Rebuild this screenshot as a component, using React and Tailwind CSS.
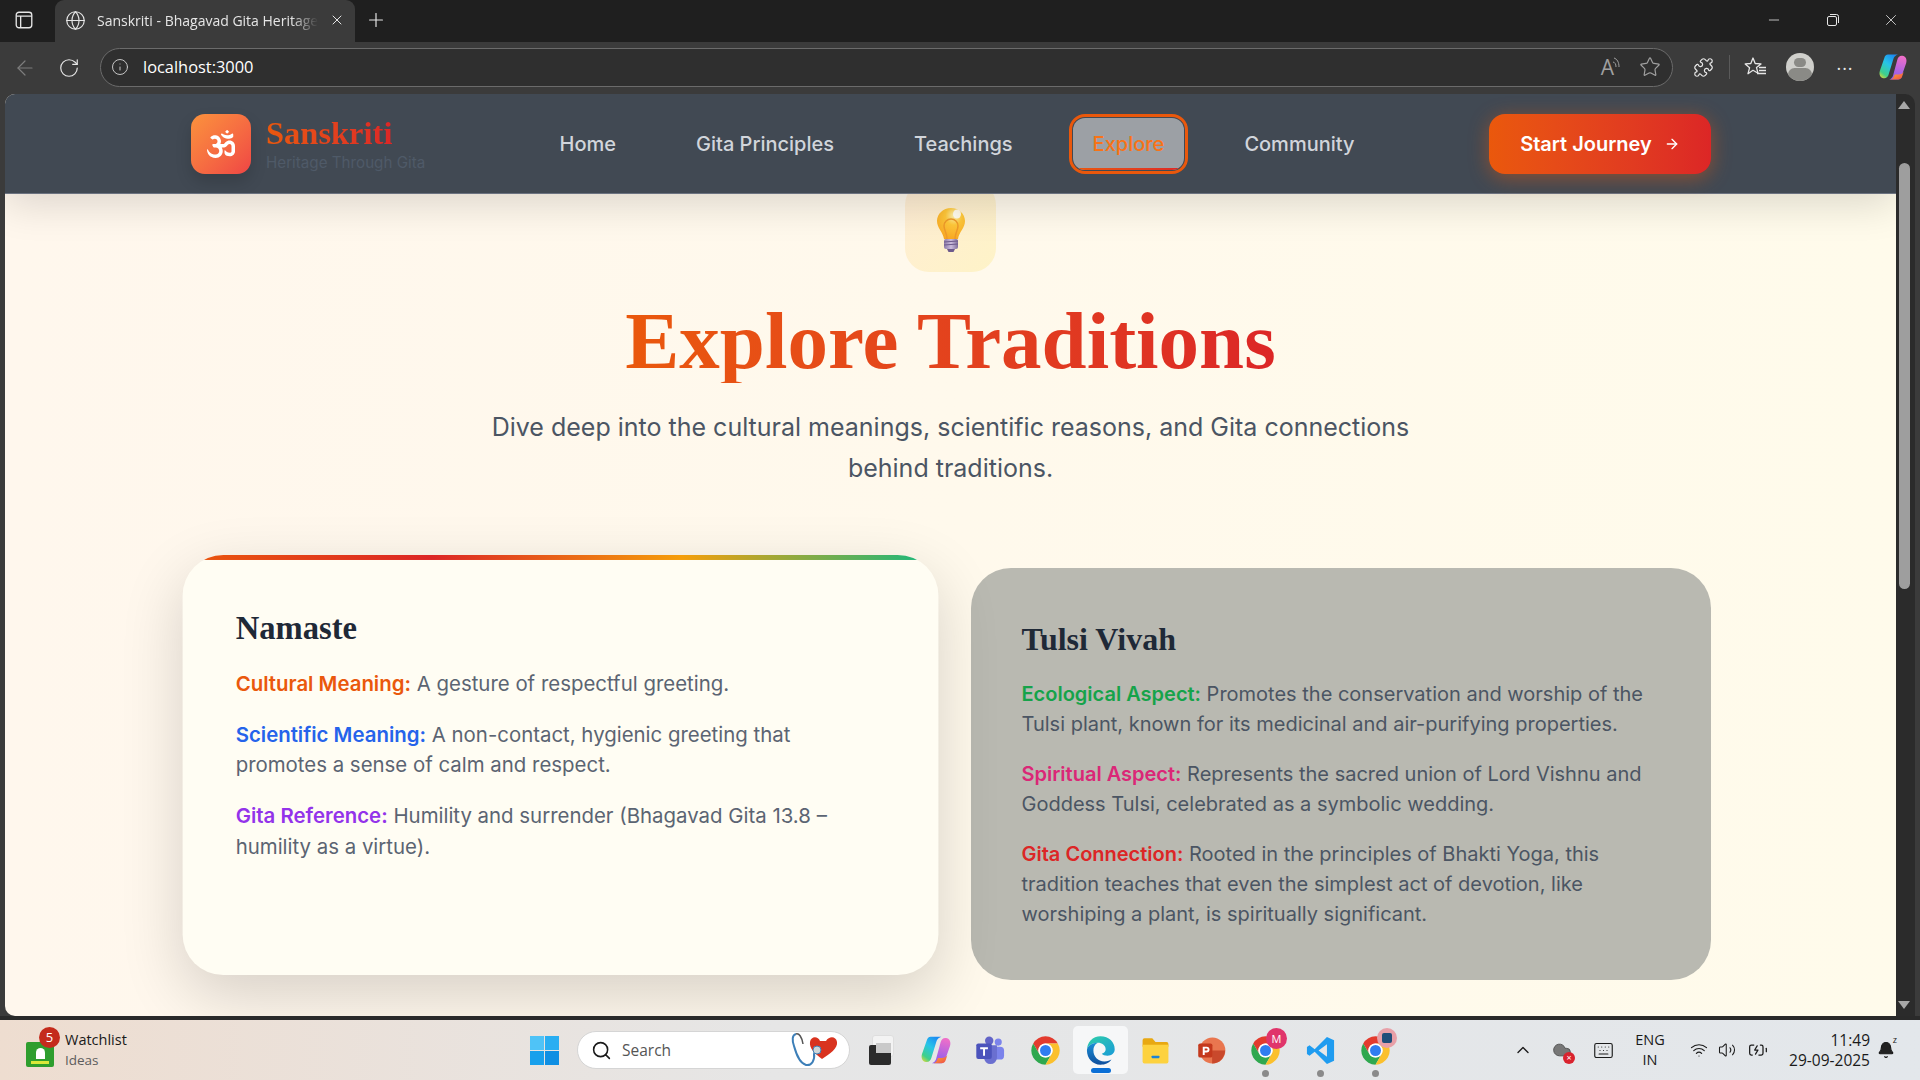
import { ArrowLeft, RotateCw, Info, Star, Puzzle, Plus, X, Minus, Globe, ArrowRight, Search, ChevronUp, Wifi, Volume2, BatteryCharging, Keyboard, Cloud, Bell } from 'lucide-react';
import { FaOm } from 'react-icons/fa';

const navItems = ['Home', 'Gita Principles', 'Teachings', 'Explore', 'Community'];

function SidebarIcon() {
  return (
    <svg width="20" height="20" viewBox="0 0 18 18" fill="none" stroke="#e6e6e6" strokeWidth="1.2">
      <rect x="2" y="2" width="14" height="14" rx="2.5" />
      <path d="M2 5.500h14M6 5.500v10.500" />
    </svg>
  );
}

function RestoreIcon() {
  return (
    <svg width="14" height="14" viewBox="0 0 14 14" fill="none" stroke="#e6e6e6" strokeWidth="1">
      <rect x="1.500" y="3.500" width="9" height="9" rx="1.500" />
      <path d="M4 1.500h6.500a2 2 0 0 1 2 2V10" />
    </svg>
  );
}

function FavoritesIcon() {
  return (
    <svg width="24" height="24" viewBox="0 0 24 24" fill="none" stroke="#e6e6e6" strokeWidth="1.300" strokeLinejoin="round">
      <path d="M9 3l2.200 5.500 5.800.4-4.500 3.700 1.500 5.600L9 15.300 4 18.700l1.600-6L1.200 8.900l5.600-.4z" />
      <path d="M15 12.500h7M15 15.500h7M13 18.500h9" />
    </svg>
  );
}

function ReadAloudIcon() {
  return (
    <div className="flex items-start">
      <span className="text-[21px] leading-none text-[#a0a0a0]">A</span>
      <svg width="8" height="14" viewBox="0 0 8 14" fill="none" stroke="#a0a0a0" strokeWidth="1" className="ml-[-1px]">
        <path d="M1 1c3 1 5 4 5 9M0 5c2 .5 3 2 3 5" />
      </svg>
    </div>
  );
}

function CopilotIcon({ size = 30, id }) {
  return (
    <svg width={size} height={size} viewBox="0 0 48 48">
      <defs>
        <linearGradient id={`${id}A`} x1="0.7" y1="0" x2="0.1" y2="1"><stop offset="0" stopColor="#1c8cf2" /><stop offset="0.4" stopColor="#27c4e8" /><stop offset="0.8" stopColor="#3fd08a" /><stop offset="1" stopColor="#d7d83f" /></linearGradient>
        <linearGradient id={`${id}B`} x1="0.6" y1="0" x2="0.4" y2="1"><stop offset="0" stopColor="#f06fc8" /><stop offset="1" stopColor="#8a5cf0" /></linearGradient>
        <linearGradient id={`${id}C`} x1="0" y1="0" x2="1" y2="1"><stop offset="0" stopColor="#ffb52e" /><stop offset="1" stopColor="#ee4a4a" /></linearGradient>
      </defs>
      <path d="M32 44H18c3-1 5-3 6-6l7-26c1-3 3-6 7-6h1c5 0 8 6 6 12l-7 20c-1 4-3 6-6 6z" fill={`url(#${id}B)`} />
      <path d="M18 44h14c4 0 6-2 7-6l2-6c-2 3-5 4-8 4h-6l-2 4c-1 2-3 4-7 4z" fill={`url(#${id}C)`} />
      <path d="M16 4h16c-3 1-6 3-7 6l-8 26c-1 3-3 6-7 6H9C4 42 1 36 3 30l7-20c1-4 3-6 6-6z" fill={`url(#${id}A)`} />
    </svg>
  );
}

function ChromeIcon() {
  return (
    <svg width="31" height="31" viewBox="0 0 48 48">
      <path d="M4.950 13A22 22 0 0 1 43.050 13L24 13A11 11 0 0 0 14.470 29.500Z" fill="#e33b2e" />
      <path d="M24 46A22 22 0 0 1 4.950 13L14.470 29.500A11 11 0 0 0 33.530 29.500Z" fill="#2fa84f" />
      <path d="M43.050 13A22 22 0 0 1 24 46L33.530 29.500A11 11 0 0 0 24 13Z" fill="#fbc02d" />
      <circle cx="24" cy="24" r="11" fill="#fff" />
      <circle cx="24" cy="24" r="8.500" fill="#2f7df0" />
    </svg>
  );
}

function EdgeIcon() {
  return (
    <svg width="31" height="31" viewBox="0 0 48 48">
      <defs>
        <linearGradient id="edA" x1="0" y1="0" x2="1" y2="1"><stop offset="0" stopColor="#2fd0a8" /><stop offset="1" stopColor="#1a9bd8" /></linearGradient>
        <linearGradient id="edB" x1="0" y1="0" x2="0" y2="1"><stop offset="0" stopColor="#1b8fd6" /><stop offset="1" stopColor="#0f4f9e" /></linearGradient>
      </defs>
      <path d="M3 24C3 11 12 2 24 2c13 0 22 9 22 20 0 6-5 10-11 10-4 0-8-1-9-3 4-1 6-4 6-7 0-6-6-10-12-10C11 12 3 17 3 24z" fill="url(#edA)" />
      <path d="M3 24c0-7 8-12 17-12-5 2-7 7-7 12 0 9 7 17 17 17 5 0 9-2 11-3-4 6-10 8-17 8C12 46 3 36 3 24z" fill="url(#edB)" />
    </svg>
  );
}

function TeamsIcon() {
  return (
    <svg width="31" height="31" viewBox="0 0 48 48">
      <circle cx="36" cy="11" r="5.500" fill="#7b83eb" />
      <rect x="28" y="18" width="17" height="20" rx="6" fill="#7b83eb" />
      <circle cx="22" cy="9" r="6.500" fill="#6264c7" />
      <path d="M12 16h22v19a10 10 0 0 1-20 0z" fill="#6a6fd0" />
      <rect x="2" y="13" width="24" height="24" rx="3" fill="#4b53bc" />
      <path d="M8 19h12v3h-4.500v10h-3V22H8z" fill="#fff" />
    </svg>
  );
}

function FolderIcon() {
  return (
    <svg width="31" height="31" viewBox="0 0 48 48">
      <path d="M4 8a3 3 0 0 1 3-3h12l5 6h17a3 3 0 0 1 3 3v4H4z" fill="#e8a812" />
      <path d="M4 15h40v26a3 3 0 0 1-3 3H7a3 3 0 0 1-3-3z" fill="#fdd23f" />
      <rect x="18" y="32" width="12" height="4" rx="1" fill="#1d83d4" />
    </svg>
  );
}

function PptIcon() {
  return (
    <svg width="31" height="31" viewBox="0 0 48 48">
      <circle cx="27" cy="24" r="20" fill="#e9764f" />
      <path d="M27 24h20a20 20 0 0 1-20 20z" fill="#c9492c" transform="translate(-0.500 0)" />
      <rect x="5" y="13" width="22" height="22" rx="3" fill="#c4391d" />
      <path d="M12 18h6a4.500 4.500 0 0 1 0 9h-3v4h-3zm3 3v3h3a1.500 1.500 0 0 0 0-3z" fill="#fff" />
    </svg>
  );
}

function VsCodeIcon() {
  return (
    <svg width="31" height="31" viewBox="0 0 48 48">
      <path fillRule="evenodd" d="M34 3L15 22 7 16 3 18.500v11L7 32l8-6 19 19 11-5V8zM34 14.500V33.500L21 24z" fill="#1f9cf0" />
    </svg>
  );
}

function WindowsIcon() {
  return (
    <div className="grid grid-cols-2 gap-[1px] w-[29px] h-[29px]">
      <div className="bg-[#4fc3f7]" />
      <div className="bg-[#29aef2]" />
      <div className="bg-[#18a0ec]" />
      <div className="bg-[#0f8fe3]" />
    </div>
  );
}

function TaskViewIcon() {
  return (
    <div className="relative w-[30px] h-[30px]">
      <div className="absolute right-[2px] top-0 w-[22px] h-[22px] rounded-[3px] bg-[#f3f3f3] border border-[#dedede]" />
      <div className="absolute left-[3px] bottom-0 w-[22px] h-[20px] rounded-[2px] bg-[#2b2b2b]" />
      <div className="absolute left-[10px] top-[8px] w-[15px] h-[10px] bg-[#c9c9c9]" />
    </div>
  );
}

function HeartScope() {
  return (
    <svg width="50" height="36" viewBox="0 0 50 36" fill="none">
      <path d="M6 2C2 3 2 8 4 14c2 7 5 17 12 19 6 1 9-5 8-12" stroke="#3d7fb8" strokeWidth="2" />
      <path d="M6 2c3-1 6 3 7 10" stroke="#555" strokeWidth="1.500" />
      <path d="M30 9c-2-5-9-5-10 1-1 6 5 12 12 17 8-5 16-11 15-17-1-6-8-6-11-1z" fill="#d9331f" />
      <circle cx="27" cy="18" r="4" fill="#cfd6d8" stroke="#3d7fb8" />
    </svg>
  );
}

function BulbIcon() {
  return (
    <svg width="30" height="46" viewBox="0 0 30 46">
      <defs>
        <radialGradient id="bulbG" cx="0.6" cy="0.25" r="0.85"><stop offset="0" stopColor="#fff3b0" /><stop offset="0.35" stopColor="#ffc83a" /><stop offset="1" stopColor="#f7a21f" /></radialGradient>
        <linearGradient id="baseG" x1="0" y1="0" x2="1" y2="0"><stop offset="0" stopColor="#8d7aa8" /><stop offset="0.5" stopColor="#cbbcdc" /><stop offset="1" stopColor="#7f6d9c" /></linearGradient>
      </defs>
      <path d="M15 1C7 1 1 7 1 14c0 7 6 11 7 18h14c1-7 7-11 7-18 0-7-6-13-14-13z" fill="url(#bulbG)" />
      <path d="M11 32c0-6-3-9-3-13a7 7 0 0 1 14 0c0 4-3 7-3 13" fill="none" stroke="#ee9a2a" strokeWidth="1.500" />
      <ellipse cx="21" cy="7" rx="4" ry="4.500" fill="#fff" opacity="0.85" />
      <rect x="8" y="32" width="14" height="10" rx="2" fill="url(#baseG)" />
      <path d="M8 35l14-1M8 38l14-1" stroke="#6d5a8c" strokeWidth="1" />
      <path d="M11 42h8l-1.500 3h-5z" fill="#6d5a8c" />
    </svg>
  );
}

function Fact({ label, color, children, muted }) {
  return (
    <p className={`mb-5 last:mb-0 text-[20px] leading-[30px] ${muted ? 'text-[#5b6472]' : 'text-[#4b5563]'}`}>
      <span className={`font-semibold ${color}`}>{label}</span> {children}
    </p>
  );
}

function AppSlot({ children, dot, active, badge }) {
  return (
    <div className={`relative w-[55px] h-[48px] flex items-center justify-center shrink-0 rounded-[5px] ${active ? 'bg-[#f6f7f8]' : ''}`}>
      {children}
      {badge}
      {dot && <div className="absolute bottom-[-3px] w-[7px] h-[7px] rounded-full bg-[#8a8a8a]" />}
      {active && <div className="absolute bottom-[1px] w-[20px] h-[5px] rounded-full bg-[#0b6fd6]" />}
    </div>
  );
}

export default function App() {
  return (
    <div className="w-[1920px] h-[1080px] flex flex-col overflow-hidden bg-[#3b3b3b] font-['Inter',sans-serif]">
      {/* tab strip */}
      <div className="h-[42px] shrink-0 bg-[#1f1f1f] flex items-center font-['Open_Sans',sans-serif] text-[#e6e6e6]">
        <div className="w-[48px] mr-[7px] flex justify-center pb-[2px]"><SidebarIcon /></div>
        <div className="w-[300px] h-full bg-[#3b3b3b] rounded-t-[9px] flex items-center pl-[9px] pr-[10px] pb-[2px]">
          <Globe className="size-[21px] shrink-0 mr-[11px] ml-[1px]" strokeWidth={1.300} />
          <span className="w-[221px] overflow-hidden whitespace-nowrap text-[14px] [mask-image:linear-gradient(to_right,black_88%,transparent)]">Sanskriti - Bhagavad Gita Heritage Through Gita</span>
          <X className="size-[16px] ml-[11px]" strokeWidth={1.500} />
        </div>
        <Plus className="size-[22px] ml-[10px] mb-[2px]" strokeWidth={1.300} />
        <div className="ml-auto flex items-center pb-[2px]">
          <div className="w-[60px] flex justify-center"><Minus className="size-[16px]" strokeWidth={1.200} /></div>
          <div className="w-[58px] flex justify-center"><RestoreIcon /></div>
          <div className="w-[58px] flex justify-center"><X className="size-[18px]" strokeWidth={1.100} /></div>
        </div>
      </div>

      {/* address bar */}
      <div className="h-[52px] shrink-0 flex items-center text-[#e6e6e6] font-['Open_Sans',sans-serif]">
        <div className="w-[46px] flex justify-center pl-[3px]"><ArrowLeft className="size-[24px] text-[#7d7d7d]" strokeWidth={1.200} /></div>
        <div className="w-[46px] flex justify-center"><RotateCw className="size-[22px]" strokeWidth={1.300} /></div>
        <div className="ml-[8px] w-[1573px] h-[39px] mt-[-2px] rounded-full border border-[#6b6b6b] bg-[#2f2f2f] flex items-center pl-[10px] pr-[11px]">
          <Info className="size-[18px] text-[#c8c8c8]" strokeWidth={1.300} />
          <span className="ml-[14px] text-[16.400px] text-white">localhost:3000</span>
          <div className="ml-auto mr-[18px]"><ReadAloudIcon /></div>
          <Star className="size-[22px] text-[#a0a0a0]" strokeWidth={1.300} />
        </div>
        <div className="ml-[20px] flex items-center mt-[-2px]">
          <Puzzle className="size-[21px]" strokeWidth={1.400} />
          <div className="w-px h-[24px] bg-[#5a5a5a] ml-[15px] mr-[14px]" />
          <FavoritesIcon />
          <div className="ml-[18px] w-[28px] h-[28px] rounded-full bg-[#cfcfcb] overflow-hidden flex flex-col items-center">
            <div className="mt-[5px] w-[12px] h-[12px] rounded-full bg-[#8a8a86]" />
            <div className="mt-[1px] w-[24px] h-[16px] rounded-full bg-[#8a8a86]" />
          </div>
          <span className="ml-[21px] w-[20px] text-center text-[18px] leading-none tracking-[1px] mt-[-8px]">...</span>
          <div className="ml-[23px]"><CopilotIcon size={30} id="cpTop" /></div>
        </div>
      </div>

      {/* viewport + scrollbar */}
      <div className="flex-1 min-h-0 flex pl-[5px] pr-[5px]">
        <div className="w-[1891px] h-full rounded-bl-[10px] rounded-tl-[10px] overflow-hidden flex flex-col bg-gradient-to-r from-[#fff7ed] to-[#fffbeb]">
          <nav className="relative z-10 h-[100px] shrink-0 bg-[#414953] shadow-[0_10px_40px_rgba(0,0,0,0.14)] border-b border-[#6b7280]">
            <div className="w-[1521px] h-full mx-auto flex items-center justify-between">
              <div className="flex items-center w-[235px] pl-[1px]">
                <div className="w-[60px] h-[60px] shrink-0 rounded-[14px] bg-gradient-to-br from-[#fb923c] to-[#ef4444] flex items-center justify-center shadow-[0_8px_16px_rgba(0,0,0,0.15)]">
                  <FaOm className="size-[28px] text-white" />
                </div>
                <div className="ml-[15px] whitespace-nowrap">
                  <div className="font-['Liberation_Serif',serif] font-bold text-[32.500px] leading-[36px] mt-[1px] text-transparent bg-clip-text bg-gradient-to-r from-[#ea580c] to-[#dc2626] w-fit">Sanskriti</div>
                  <div className="text-[15.200px] leading-[20px] mt-[2px] text-[#4f5a68]">Heritage Through Gita</div>
                </div>
              </div>
              <div className="flex items-center gap-[40px] text-[20px] font-medium text-[#d1d5db]">
                {navItems.map((item) => (
                  item === 'Explore' ? (
                    <div key={item} className="relative h-[52px] px-[20px] flex items-center rounded-[12px] bg-[#9ca0a5] text-[#f97316] outline-[3px] outline-[#ea580c] outline-offset-[1px] overflow-hidden">
                      {item}
                      <div className="absolute left-0 right-0 bottom-0 h-[2px] bg-gradient-to-r from-[#ea580c] to-[#dc2626]" />
                    </div>
                  ) : (
                    <div key={item} className="h-[52px] px-[20px] flex items-center">{item}</div>
                  )
                ))}
              </div>
              <button className="w-[222px] h-[60px] rounded-[16px] bg-gradient-to-r from-[#ea580c] to-[#dc2626] text-white text-[20px] font-semibold flex items-center justify-center gap-[12px] shadow-[0_4px_20px_rgba(234,88,12,0.45)]">
                Start Journey
                <ArrowRight className="size-[16px]" strokeWidth={2} />
              </button>
            </div>
          </nav>

          <main className="flex-1 min-h-0 flex flex-col items-center">
            <div className="mt-[-13px] w-[91px] h-[91px] shrink-0 rounded-[24px] bg-gradient-to-br from-[#ffedd5] to-[#fef3c7] flex items-center justify-center pt-[7px]">
              <BulbIcon />
            </div>
            <h1 className="mt-[27px] font-['Liberation_Serif',serif] font-bold text-[81px] leading-[84px] text-transparent bg-clip-text bg-gradient-to-r from-[#ea580c] to-[#dc2626]">Explore Traditions</h1>
            <p className="mt-[24px] w-[960px] text-center text-[25px] leading-[41px] text-[#4b5563]">
              Dive deep into the cultural meanings, scientific reasons, and Gita connections behind traditions.
            </p>

            <div className="mt-[79px] w-[1521px] grid grid-cols-2 gap-[40px]">
              <div className="relative overflow-hidden rounded-[40px] p-[51px] pl-[52px] bg-[#fffdf3] scale-[1.02] translate-y-[-9px] shadow-[0_20px_60px_rgba(0,0,0,0.16)]">
                <div className="absolute left-0 right-0 top-0 h-[5px] bg-[linear-gradient(90deg,#ea580c,#dc2626_33%,#f59e0b_66%,#10b981)]" />
                <h3 className="font-['Liberation_Serif',serif] font-bold text-[32px] leading-[40px] text-[#1f2937] mb-[20px]">Namaste</h3>
                <Fact muted label="Cultural Meaning:" color="text-[#ea580c]">A gesture of respectful greeting.</Fact>
                <Fact muted label="Scientific Meaning:" color="text-[#2563eb]">A non-contact, hygienic greeting that promotes a sense of calm and respect.</Fact>
                <Fact muted label="Gita Reference:" color="text-[#9333ea]">Humility and surrender (Bhagavad Gita 13.8 – humility as a virtue).</Fact>
              </div>
              <div className="rounded-[40px] p-[51px] bg-[#b9b9b1]">
                <h3 className="font-['Liberation_Serif',serif] font-bold text-[32px] leading-[40px] text-[#1f2937] mb-[20px]">Tulsi Vivah</h3>
                <Fact label="Ecological Aspect:" color="text-[#16a34a]">Promotes the conservation and worship of the Tulsi plant, known for its medicinal and air-purifying properties.</Fact>
                <Fact label="Spiritual Aspect:" color="text-[#db2777]">Represents the sacred union of Lord Vishnu and Goddess Tulsi, celebrated as a symbolic wedding.</Fact>
                <Fact label="Gita Connection:" color="text-[#dc2626]">Rooted in the principles of Bhakti Yoga, this tradition teaches that even the simplest act of devotion, like worshiping a plant, is spiritually significant.</Fact>
              </div>
            </div>
          </main>
        </div>
        <div className="w-[19px] h-full bg-[#2b2b2b] rounded-tr-[10px] flex flex-col items-center pr-[3px]">
          <div className="mt-[7px] w-0 h-0 border-x-[6px] border-x-transparent border-b-[8px] border-b-[#a8a8a8]" />
          <div className="mt-[54px] w-[11px] h-[426px] rounded-full bg-[#9e9e9e]" />
          <div className="mt-auto mb-[7px] w-0 h-0 border-x-[6px] border-x-transparent border-t-[8px] border-t-[#a8a8a8]" />
        </div>
      </div>
      <div className="h-[4px] shrink-0 bg-[#2a2a2a]" />

      {/* windows taskbar */}
      <div className="h-[60px] shrink-0 flex items-center bg-gradient-to-r from-[#eeddd0] via-[#e6e6e6] via-40% to-[#e3e7eb] font-['Open_Sans',sans-serif] text-[#1a1a1a]">
        <div className="w-[530px] shrink-0 flex items-center pl-[26px]">
          <div className="relative w-[28px] h-[25px] mt-[8px] rounded-[2px] bg-[#2e9e2e] flex flex-col items-center justify-end pb-[3px]">
            <div className="w-[9px] h-[11px] mb-[2px] rounded-t-full bg-white" />
            <div className="w-[18px] h-[3px] bg-[#d9e93a]" />
            <div className="absolute left-[13px] top-[-15px] w-[21px] h-[21px] rounded-full bg-[#c42b1c] text-white text-[13px] leading-[21px] text-center">5</div>
          </div>
          <div className="ml-[11px] flex flex-col">
            <span className="text-[14.500px] leading-[20px]">Watchlist</span>
            <span className="text-[13.500px] leading-[20px] text-[#5c5c5c]">Ideas</span>
          </div>
        </div>
        <WindowsIcon />
        <div className="ml-[18px] w-[273px] h-[38px] shrink-0 rounded-full bg-white border border-[#d5d5d5] flex items-center pl-[13px] pr-[9px]">
          <Search className="size-[21px] text-[#1a1a1a]" strokeWidth={1.800} />
          <span className="ml-[10px] mt-[1px] text-[15.500px] text-[#555]">Search</span>
          <div className="ml-auto"><HeartScope /></div>
        </div>
        <div className="ml-[3px] flex items-center">
          <AppSlot><TaskViewIcon /></AppSlot>
          <AppSlot><CopilotIcon size={32} id="cpBar" /></AppSlot>
          <AppSlot><TeamsIcon /></AppSlot>
          <AppSlot><ChromeIcon /></AppSlot>
          <AppSlot active><EdgeIcon /></AppSlot>
          <AppSlot><FolderIcon /></AppSlot>
          <AppSlot><PptIcon /></AppSlot>
          <AppSlot dot badge={<div className="absolute right-[6px] top-[2px] w-[21px] h-[21px] rounded-full bg-[#e0356b] text-white text-[11px] leading-[21px] text-center">M</div>}><ChromeIcon /></AppSlot>
          <AppSlot dot><VsCodeIcon /></AppSlot>
          <AppSlot dot badge={<div className="absolute right-[6px] top-[2px] w-[20px] h-[20px] rounded-full bg-[#e8a0a8] flex items-center justify-center"><div className="w-[10px] h-[10px] rounded-[2px] bg-[#1f4e79]" /></div>}><ChromeIcon /></AppSlot>
        </div>
        <div className="ml-[110px] flex items-center">
          <ChevronUp className="size-[20px]" strokeWidth={1.600} />
          <div className="relative ml-[19px]">
            <Cloud className="size-[20px] text-[#555] fill-[#777]" strokeWidth={1.200} />
            <div className="absolute right-[-3px] bottom-[-4px] w-[12px] h-[12px] rounded-full bg-[#d9232e] text-white text-[9px] leading-[11px] text-center">×</div>
          </div>
          <Keyboard className="size-[21px] ml-[21px]" strokeWidth={1.300} />
          <div className="ml-[18px] w-[36px] text-center text-[14.500px] leading-[20px]">ENG<br />IN</div>
          <Wifi className="size-[18px] ml-[22px]" strokeWidth={1.600} />
          <Volume2 className="size-[18px] ml-[10px]" strokeWidth={1.400} />
          <BatteryCharging className="size-[20px] ml-[12px]" strokeWidth={1.500} />
          <div className="ml-[14px] w-[88px] text-right text-[15.500px] leading-[20px]">11:49<br />29-09-2025</div>
          <div className="relative ml-[7px]">
            <Bell className="size-[18px] fill-[#222]" strokeWidth={1.600} />
            <span className="absolute right-[-2px] top-[-6px] text-[9px] leading-none">z</span>
          </div>
        </div>
      </div>
    </div>
  );
}
